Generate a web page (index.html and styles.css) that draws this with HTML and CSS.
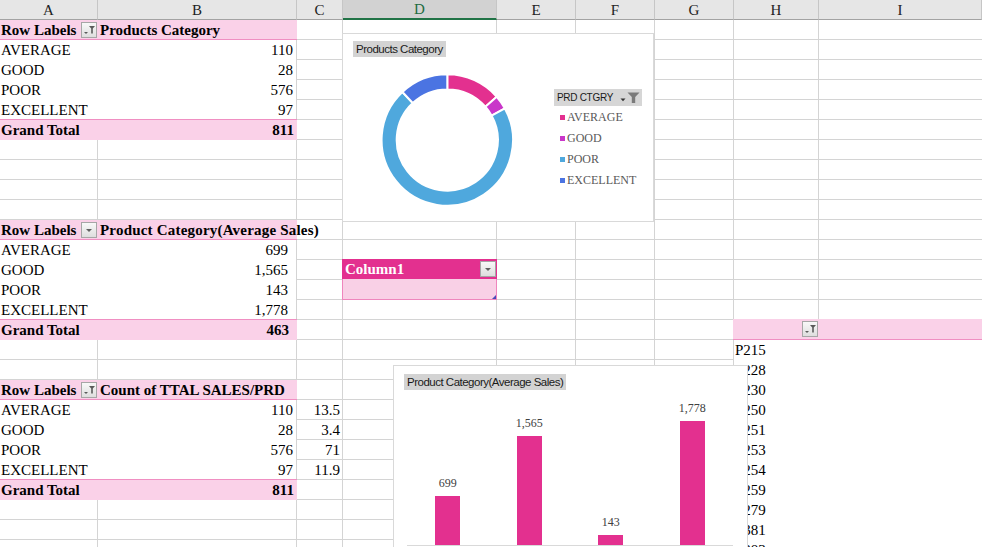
FILE: index.html
```html
<!DOCTYPE html>
<html lang="en">
<head>
<meta charset="utf-8">
<title>Sheet</title>
<link rel="stylesheet" href="styles.css">
</head>
<body>
<div class="sheet">
  <div class="cols">
    <div class="ch">A</div><div class="ch">B</div><div class="ch">C</div><div class="ch sel">D</div><div class="ch">E</div><div class="ch">F</div><div class="ch">G</div><div class="ch">H</div><div class="ch">I</div>
  </div>
  <div class="grid">
    <div class="pivot p1">
      <div class="pr hd"><div class="lab"><span>Row Labels</span><span class="fbtn"><svg width="14" height="14" viewBox="0 0 14 14"><path d="M7 3h6l-2.2 2.6v5h-1.6v-5z" fill="#5a5a5a"/><path d="M2 9h4l-2 2z" fill="#5a5a5a"/></svg></span></div><div class="ttl">Products Category</div></div>
      <div class="pr"><div class="lab">AVERAGE</div><div class="val">110</div></div>
      <div class="pr"><div class="lab">GOOD</div><div class="val">28</div></div>
      <div class="pr"><div class="lab">POOR</div><div class="val">576</div></div>
      <div class="pr"><div class="lab">EXCELLENT</div><div class="val">97</div></div>
      <div class="pr gt"><div class="lab">Grand Total</div><div class="val">811</div></div>
    </div>

    <div class="pivot p2">
      <div class="pr hd"><div class="lab"><span>Row Labels</span><span class="fbtn"><svg width="14" height="14" viewBox="0 0 14 14"><path d="M4 6h6l-3 3z" fill="#606060"/></svg></span></div><div class="ttl wide">Product Category(Average Sales)</div></div>
      <div class="pr"><div class="lab">AVERAGE</div><div class="val">699</div></div>
      <div class="pr"><div class="lab">GOOD</div><div class="val">1,565</div></div>
      <div class="pr"><div class="lab">POOR</div><div class="val">143</div></div>
      <div class="pr"><div class="lab">EXCELLENT</div><div class="val">1,778</div></div>
      <div class="pr gt"><div class="lab">Grand Total</div><div class="val">463</div></div>
    </div>

    <div class="tbl">
      <div class="th"><span>Column1</span><span class="dbtn"><svg width="14" height="14" viewBox="0 0 14 14"><path d="M4 6h6l-3 3z" fill="#606060"/></svg></span></div>
      <div class="tr"></div>
    </div>

    <div class="pivot p3">
      <div class="pr hd"><div class="lab"><span>Row Labels</span><span class="fbtn"><svg width="14" height="14" viewBox="0 0 14 14"><path d="M7 3h6l-2.2 2.6v5h-1.6v-5z" fill="#5a5a5a"/><path d="M2 9h4l-2 2z" fill="#5a5a5a"/></svg></span></div><div class="ttl">Count of TTAL SALES/PRD</div></div>
      <div class="pr"><div class="lab">AVERAGE</div><div class="val">110</div></div>
      <div class="pr"><div class="lab">GOOD</div><div class="val">28</div></div>
      <div class="pr"><div class="lab">POOR</div><div class="val">576</div></div>
      <div class="pr"><div class="lab">EXCELLENT</div><div class="val">97</div></div>
      <div class="pr gt"><div class="lab">Grand Total</div><div class="val">811</div></div>
    </div>
    <div class="cvals">
      <div class="cv">13.5</div>
      <div class="cv">3.4</div>
      <div class="cv">71</div>
      <div class="cv">11.9</div>
    </div>

    <div class="hp">
      <div class="hhd"><div class="hcell"><span class="fbtn"><svg width="14" height="14" viewBox="0 0 14 14"><path d="M7 3h6l-2.2 2.6v5h-1.6v-5z" fill="#5a5a5a"/><path d="M2 9h4l-2 2z" fill="#5a5a5a"/></svg></span></div><div></div></div>
      <div class="hr">P215</div>
      <div class="hr">P228</div>
      <div class="hr">P230</div>
      <div class="hr">P250</div>
      <div class="hr">P251</div>
      <div class="hr">P253</div>
      <div class="hr">P254</div>
      <div class="hr">P259</div>
      <div class="hr">P279</div>
      <div class="hr">P381</div>
      <div class="hr">P383</div>
    </div>
  </div>

  <div class="chart donut">
    <div class="ctitle dtitle">Products Category</div>
    <svg class="ring" width="310" height="187" viewBox="0 0 310 187">
      <g stroke="#fff" stroke-width="2" stroke-linejoin="round">
        <path d="M104.3 40.3 A65.7 65.7 0 0 1 153.76 62.76 L142.39 72.69 A50.6 50.6 0 0 0 104.3 55.4 Z" fill="#e3308f"/>
        <path d="M153.76 62.76 A65.7 65.7 0 0 1 161.91 74.41 L148.67 81.67 A50.6 50.6 0 0 0 142.39 72.69 Z" fill="#c936c9"/>
        <path d="M161.91 74.41 A65.7 65.7 0 1 1 59.44 58 L69.75 69.03 A50.6 50.6 0 1 0 148.67 81.67 Z" fill="#4fa8dd"/>
        <path d="M59.44 58 A65.7 65.7 0 0 1 104.3 40.3 L104.3 55.4 A50.6 50.6 0 0 0 69.75 69.03 Z" fill="#4b74e2"/>
      </g>
    </svg>
    <div class="legend">
      <div class="lbtn"><span>PRD CTGRY</span><svg width="21" height="13" viewBox="0 0 21 13"><path d="M0.5 7.5h5l-2.5 2.8z" fill="#333"/><path d="M7.5 1.5h12l-4.3 4.6v6h-3.4v-6z" fill="#7a7a7a"/></svg></div>
      <div class="li"><span class="sw s1"></span>AVERAGE</div>
      <div class="li"><span class="sw s2"></span>GOOD</div>
      <div class="li"><span class="sw s3"></span>POOR</div>
      <div class="li"><span class="sw s4"></span>EXCELLENT</div>
    </div>
  </div>

  <div class="chart bars">
    <div class="ctitle btitle">Product Category(Average Sales)</div>
    <div class="plot">
      <div class="cat"><div class="bl">699</div><div class="bar" style="height:48.7px"></div></div>
      <div class="cat"><div class="bl">1,565</div><div class="bar" style="height:109.1px"></div></div>
      <div class="cat"><div class="bl">143</div><div class="bar" style="height:10px"></div></div>
      <div class="cat"><div class="bl">1,778</div><div class="bar" style="height:124px"></div></div>
    </div>
  </div>
</div>
</body>
</html>
```
FILE: styles.css
```css
* { box-sizing: border-box; }
html, body { margin: 0; padding: 0; overflow: hidden; background: #fff; }
body {
  width: 982px; height: 547px;
  font-family: "Liberation Serif", "Times New Roman", serif;
  font-size: 15px; color: #000;
}
.sheet { position: relative; width: 982px; height: 547px; overflow: hidden; }

.cols, .grid {
  display: grid;
  grid-template-columns: 98px 199px 46px 154px 79px 79px 79px 85px 1fr;
}
.cols { height: 20px; background: #e6e6e6; }
.ch {
  height: 20px; line-height: 20px; text-align: center; color: #222;
  border-right: 1px solid #c6c6c6; border-bottom: 1px solid #a3a3a3;
}
.ch.sel { background: #d2d2d2; color: #1e6c41; border-bottom: 2px solid #217346; line-height: 19px; }

.grid {
  grid-auto-rows: 20px;
  height: 527px;
  background-image:
    linear-gradient(to right,
      transparent 97px, #d4d4d4 97px 98px,
      transparent 98px 296px, #d4d4d4 296px 297px,
      transparent 297px 342px, #d4d4d4 342px 343px,
      transparent 343px 496px, #d4d4d4 496px 497px,
      transparent 497px 575px, #d4d4d4 575px 576px,
      transparent 576px 654px, #d4d4d4 654px 655px,
      transparent 655px 733px, #d4d4d4 733px 734px,
      transparent 734px 818px, #d4d4d4 818px 819px,
      transparent 819px),
    repeating-linear-gradient(to bottom, transparent 0 19px, #d4d4d4 19px 20px);
}

/* pivot tables */
.pivot { grid-column: 1 / 3; width: 296px; background: #fff; display: flex; flex-direction: column; }
.p1 { grid-row: 1 / 7; }
.p2 { grid-row: 11 / 17; }
.p3 { grid-row: 19 / 25; }
.pr {
  display: grid; grid-template-columns: 98px 1fr;
  height: 20px; line-height: 20px; white-space: nowrap; flex: none;
}
.pr.hd {
  width: 297px; background: #fad1e8; border-bottom: 1px solid #f08fc2;
  line-height: 20px; font-weight: bold;
}
.pr.gt {
  width: 297px; height: 21px; margin-top: -1px;
  background: #fad1e8; border-top: 1px solid #f08fc2; font-weight: bold;
}
.lab { padding-left: 1px; display: flex; align-items: center; justify-content: space-between; }
.ttl { padding-left: 2px; }
.ttl.wide { letter-spacing: 0.2px; }
.val { text-align: right; padding-right: 3px; }
.p2 .val { padding-right: 8px; }

.fbtn, .dbtn {
  width: 16px; height: 16px; flex: none; display: flex;
  border: 1px solid #a6a6a6; background: linear-gradient(#f8f8f8, #dedede);
}
.lab .fbtn { margin-right: 1px; }

.cvals { grid-column: 3; grid-row: 20 / 24; display: flex; flex-direction: column; }
.cv { height: 20px; line-height: 20px; text-align: right; padding-right: 3px; }

/* Column1 table */
.tbl { grid-column: 4; grid-row: 13 / 15; margin: -1px 0 0 -1px; display: flex; flex-direction: column; }
.th {
  height: 20px; flex: none; background: #e3308f; color: #fff; font-weight: bold;
  display: flex; align-items: center; justify-content: space-between;
  padding: 0 1px 0 3px; line-height: 20px;
}
.tr {
  flex: 1; position: relative; background: #f9d0e6;
  border: 1px solid #ef86bd; border-top: none;
}
.tr::after {
  content: ""; position: absolute; right: 0; bottom: 0;
  border-left: 4px solid transparent; border-bottom: 4px solid #4a4ab8;
}

/* right pivot */
.hp { grid-column: 8 / 10; grid-row: 16 / 28; background: #fff; display: flex; flex-direction: column; }
.hhd {
  flex: none; margin-left: -1px; margin-top: -1px; height: 21px;
  background: #fad1e8; border-bottom: 1px solid #f08fc2;
  display: grid; grid-template-columns: 86px 1fr;
}
.hcell { display: flex; justify-content: flex-end; align-items: center; padding-right: 1px; }
.hr { height: 20px; line-height: 20px; padding-left: 1px; flex: none; }

/* charts */
.chart { position: absolute; background: #fff; border: 1px solid #d9d9d9; }
.ctitle {
  background: #d3d3d3; color: #1a1a1a;
  font-family: "Liberation Sans", Arial, sans-serif; font-size: 11.5px; letter-spacing: -0.5px;
  height: 16px; line-height: 16px; padding: 0 3px; white-space: nowrap; width: max-content;
}
.donut { left: 342px; top: 33px; width: 312px; height: 189px; }
.dtitle { position: absolute; left: 10px; top: 7px; }
.ring { position: absolute; left: 0; top: 0; }
.legend { position: absolute; left: 211px; top: 55px; }
.lbtn {
  width: 88px; height: 17px; background: #d6d6d6;
  display: flex; align-items: center; justify-content: space-between;
  padding: 0 1px 0 3px;
  font-family: "Liberation Sans", Arial, sans-serif; font-size: 10px; letter-spacing: -0.3px; color: #1a1a1a;
}
.li {
  display: flex; align-items: center; height: 21px; padding-left: 6px;
  font-size: 12px; color: #595959;
}
.lbtn + .li { margin-top: 1px; }
.sw { width: 5px; height: 5px; margin-right: 2px; flex: none; }
.s1 { background: #e3308f; }
.s2 { background: #c936c9; }
.s3 { background: #4fa8dd; }
.s4 { background: #4b74e2; }

.bars { left: 393px; top: 365px; width: 355px; height: 200px; }
.btitle { margin: 8px 0 0 10px; }
.plot {
  margin: 5px 0 0 13px; width: 326px; height: 151px;
  border-bottom: 1px solid #d9d9d9;
  display: flex; align-items: flex-end;
}
.cat { flex: 1; display: flex; flex-direction: column; align-items: center; }
.bl { font-size: 12px; line-height: 14px; color: #404040; margin-bottom: 6px; }
.bar { width: 25px; background: #e3308f; }
```
